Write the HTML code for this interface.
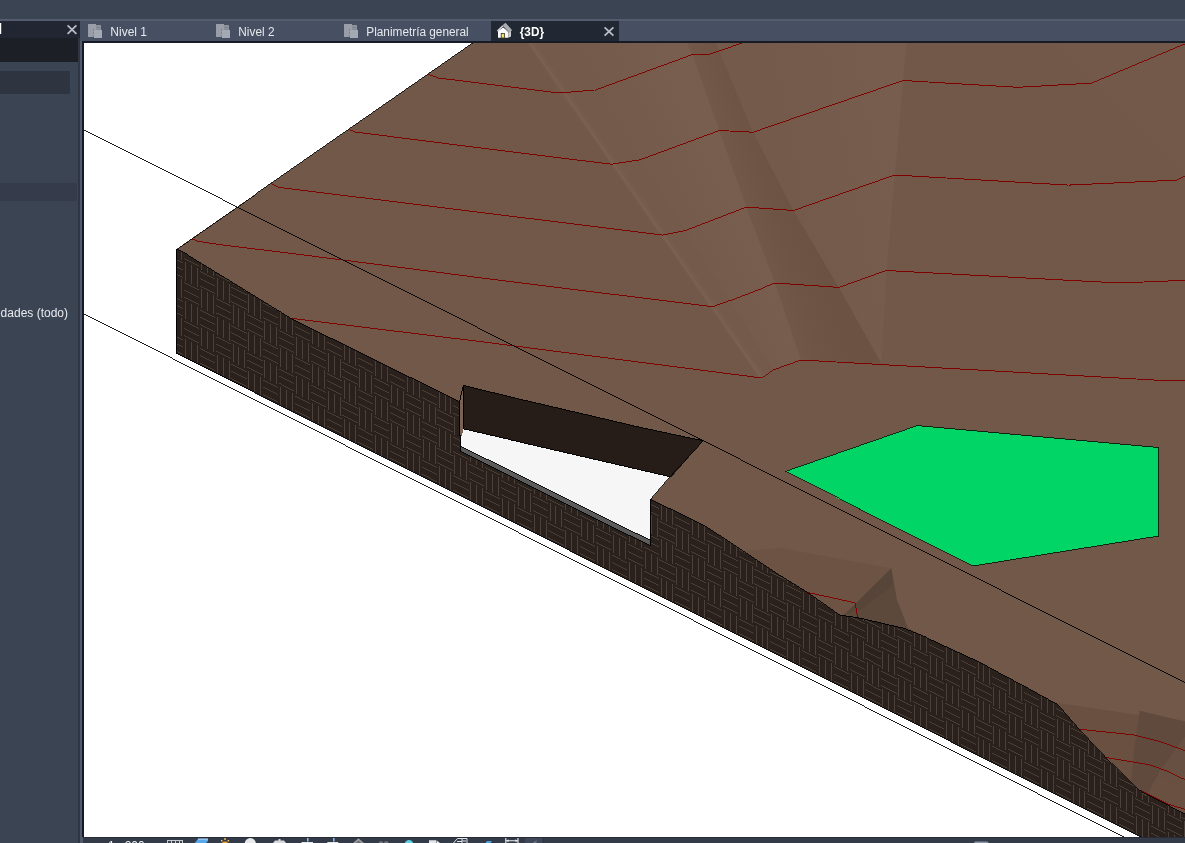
<!DOCTYPE html>
<html lang="es">
<head>
<meta charset="utf-8">
<title>Revit - {3D}</title>
<style>
html,body{margin:0;padding:0;}
body{width:1185px;height:843px;overflow:hidden;background:#3b4453;position:relative;font-family:"Liberation Sans",sans-serif;font-size:12px;color:#e4e7ec;}
.abs{position:absolute;}
#topbar{left:0;top:0;width:1185px;height:19px;background:#3b4453;}
#tabbar{left:80px;top:21px;width:1105px;height:20px;background:#475062;}
#topline{left:0;top:19px;width:1185px;height:2px;background:#525c6c;}
#tabline{left:83px;top:41px;width:1102px;height:2px;background:#161b25;}
.tab{top:21px;height:20px;line-height:20px;white-space:nowrap;}
.tab .lbl{position:absolute;top:0;left:0;}
#tab3d{left:491px;width:128px;background:#222833;}
#panel{left:0;top:19px;width:80px;height:824px;background:#3b4453;}
#phead{left:0;top:21px;width:80px;height:17px;background:#212632;}
#pdark{left:0;top:38px;width:78px;height:24px;background:#1c1f26;}
#pbox1{left:0;top:71px;width:70px;height:23px;background:#2e3440;}
#pbox2{left:0;top:183px;width:77px;height:18px;background:#353b4a;}
#pedge{left:78px;top:38px;width:2px;height:805px;background:#2f3541;}
#psplit{left:80px;top:21px;width:3px;height:824px;background:#505a6b;}
#pline{left:82px;top:41px;width:2px;height:796px;background:#161b25;}
#view{left:84px;top:43px;width:1101px;height:794px;background:#fff;overflow:hidden;}
#bottombar{left:83px;top:837px;width:1102px;height:6px;background:#333b48;overflow:hidden;border-top:1px solid #272c36;box-sizing:border-box;}
#ptext{will-change:transform;left:-42.5px;top:306px;width:110px;text-align:right;white-space:nowrap;color:#e8eaee;font-size:12px;line-height:14px;}
</style>
</head>
<body>
<div id="topbar" class="abs"></div>
<div id="panel" class="abs"></div>
<div id="phead" class="abs"></div>
<div id="pdark" class="abs"></div>
<div id="pbox1" class="abs"></div>
<div id="pbox2" class="abs"></div>
<div id="ptext" class="abs">Propiedades (todo)</div>
<div id="pedge" class="abs"></div>
<div id="psplit" class="abs"></div>
<div id="topline" class="abs"></div>
<div id="tabbar" class="abs"></div>
<div id="tab3d" class="abs tab"></div>
<div id="tabline" class="abs"></div>
<div id="pline" class="abs"></div>
<div id="view" class="abs">
<svg width="1185" height="843" viewBox="0 0 1185 843" style="position:absolute;left:-84px;top:-43px;">
<defs><clipPath id="sidec"><polygon points="176.5,249 188.2,255.3 236,284.6 292,319 459.5,401.7 650.6,499.2 706.3,526.6 780,575.4 807,592 839.9,615.1 857.6,617.6 901.5,627.8 926.8,637.9 980,662.4 1000,673.3 1025,686.6 1058.2,704.9 1079.8,729.8 1106.4,758 1139.6,790.5 1185,814 1185,860 1141,837 176.5,353.5"/></clipPath>
<linearGradient id="gband" gradientUnits="userSpaceOnUse" x1="740" y1="215" x2="800" y2="195"><stop offset="0" stop-color="#735949"/><stop offset="0.55" stop-color="#6d5445"/><stop offset="1" stop-color="#6b5243"/></linearGradient>
<linearGradient id="gright" gradientUnits="userSpaceOnUse" x1="800" y1="200" x2="900" y2="180"><stop offset="0" stop-color="#735a4a"/><stop offset="1" stop-color="#775d4d"/></linearGradient>
<linearGradient id="gmid" gradientUnits="userSpaceOnUse" x1="670" y1="240" x2="745" y2="205"><stop offset="0" stop-color="#745a4a"/><stop offset="1" stop-color="#785e4e"/></linearGradient>
</defs>
<polygon points="176.5,249 188.2,255.3 236,284.6 292,319 459.5,401.7 650.6,499.2 706.3,526.6 780,575.4 807,592 839.9,615.1 857.6,617.6 901.5,627.8 926.8,637.9 980,662.4 1000,673.3 1025,686.6 1058.2,704.9 1079.8,729.8 1106.4,758 1139.6,790.5 1185,814 1185,860 1141,837 176.5,353.5" fill="#2a211c" shape-rendering="crispEdges"/>
<g clip-path="url(#sidec)" fill="none" stroke="#4c413a" shape-rendering="crispEdges">
<path stroke-width="1" d="M169.5 235V253.6M175.5 238V256.6M181.5 240.9V259.6M169.5 273.4V292M175.5 276.4V295M181.5 279.4V298M169.5 311.8V330.5M175.5 314.8V333.5M181.5 317.8V336.4M169.5 350.3V368.9M175.5 353.3V371.9M181.5 356.3V374.9M185.5 262.1V280.8M191.5 265.1V283.7M197.5 268.1V286.7M185.5 300.6V319.2M191.5 303.6V322.2M197.5 306.6V325.2M185.5 339V357.6M191.5 342V360.6M197.5 345V363.6M201.5 250.9V269.5M207.5 253.9V272.5M213.5 256.8V275.5M201.5 289.3V307.9M207.5 292.3V310.9M213.5 295.3V313.9M201.5 327.8V346.4M207.5 330.7V349.4M213.5 333.7V352.3M201.5 366.2V384.8M207.5 369.2V387.8M213.5 372.2V390.8M217.5 278.1V296.7M223.5 281V299.7M229.5 284V302.6M217.5 316.5V335.1M223.5 319.5V338.1M229.5 322.5V341.1M217.5 354.9V373.6M223.5 357.9V376.5M229.5 360.9V379.5M233.5 266.8V285.4M238.5 269.8V288.4M244.5 272.8V291.4M233.5 305.2V323.9M238.5 308.2V326.8M244.5 311.2V329.8M233.5 343.7V362.3M238.5 346.7V365.3M244.5 349.6V368.3M233.5 382.1V400.7M238.5 385.1V403.7M244.5 388.1V406.7M248.5 294V312.6M254.5 297V315.6M260.5 299.9V318.6M248.5 332.4V351M254.5 335.4V354M260.5 338.4V357M248.5 370.9V389.5M254.5 373.8V392.5M260.5 376.8V395.4M264.5 282.7V301.3M270.5 285.7V304.3M276.5 288.7V307.3M264.5 321.1V339.8M270.5 324.1V342.8M276.5 327.1V345.7M264.5 359.6V378.2M270.5 362.6V381.2M276.5 365.6V384.2M264.5 398V416.6M270.5 401V419.6M276.5 404V422.6M280.5 309.9V328.5M286.5 312.9V331.5M292.5 315.9V334.5M280.5 348.3V366.9M286.5 351.3V369.9M292.5 354.3V372.9M280.5 386.8V405.4M286.5 389.7V408.4M292.5 392.7V411.4M296.5 298.6V317.2M302.5 301.6V320.2M308.5 304.6V323.2M296.5 337.1V355.7M302.5 340V358.7M308.5 343V361.6M296.5 375.5V394.1M302.5 378.5V397.1M308.5 381.5V400.1M296.5 413.9V432.6M302.5 416.9V435.5M308.5 419.9V438.5M312.5 325.8V344.4M318.5 328.8V347.4M324.5 331.8V350.4M312.5 364.2V382.9M318.5 367.2V385.8M324.5 370.2V388.8M312.5 402.7V421.3M318.5 405.7V424.3M324.5 408.6V427.3M328.5 314.5V333.2M334.5 317.5V336.1M340.5 320.5V339.1M328.5 353V371.6M334.5 356V374.6M340.5 358.9V377.6M328.5 391.4V410M334.5 394.4V413M340.5 397.4V416M328.5 429.9V448.5M334.5 432.8V451.5M340.5 435.8V454.4M344.5 341.7V360.3M349.5 344.7V363.3M355.5 347.7V366.3M344.5 380.2V398.8M349.5 383.1V401.8M355.5 386.1V404.7M344.5 418.6V437.2M349.5 421.6V440.2M355.5 424.6V443.2M359.5 330.4V349.1M365.5 333.4V352.1M371.5 336.4V355M359.5 368.9V387.5M365.5 371.9V390.5M371.5 374.9V393.5M359.5 407.3V425.9M365.5 410.3V428.9M371.5 413.3V431.9M359.5 445.8V464.4M365.5 448.8V467.4M371.5 451.7V470.4M375.5 357.6V376.2M381.5 360.6V379.2M387.5 363.6V382.2M375.5 396.1V414.7M381.5 399V417.7M387.5 402V420.7M375.5 434.5V453.1M381.5 437.5V456.1M387.5 440.5V459.1M391.5 346.4V365M397.5 349.3V368M403.5 352.3V370.9M391.5 384.8V403.4M397.5 387.8V406.4M403.5 390.8V409.4M391.5 423.2V441.9M397.5 426.2V444.8M403.5 429.2V447.8M391.5 461.7V480.3M397.5 464.7V483.3M403.5 467.6V486.3M407.5 373.5V392.2M413.5 376.5V395.1M419.5 379.5V398.1M407.5 412V430.6M413.5 415V433.6M419.5 417.9V436.6M407.5 450.4V469M413.5 453.4V472M419.5 456.4V475M423.5 362.3V380.9M429.5 365.3V383.9M435.5 368.2V386.9M423.5 400.7V419.3M429.5 403.7V422.3M435.5 406.7V425.3M423.5 439.2V457.8M429.5 442.1V460.8M435.5 445.1V463.7M423.5 477.6V496.2M429.5 480.6V499.2M435.5 483.6V502.2M439.5 389.5V408.1M445.5 392.4V411.1M450.5 395.4V414M439.5 427.9V446.5M445.5 430.9V449.5M450.5 433.9V452.5M439.5 466.3V485M445.5 469.3V487.9M450.5 472.3V490.9M454.5 378.2V396.8M460.5 381.2V399.8M466.5 384.2V402.8M454.5 416.6V435.2M460.5 419.6V438.2M466.5 422.6V441.2M454.5 455.1V473.7M460.5 458.1V476.7M466.5 461V479.7M454.5 493.5V512.1M460.5 496.5V515.1M466.5 499.5V518.1M470.5 405.4V424M476.5 408.3V427M482.5 411.3V430M470.5 443.8V462.4M476.5 446.8V465.4M482.5 449.8V468.4M470.5 482.2V500.9M476.5 485.2V503.8M482.5 488.2V506.8M486.5 394.1V412.7M492.5 397.1V415.7M498.5 400.1V418.7M486.5 432.5V451.2M492.5 435.5V454.1M498.5 438.5V457.1M486.5 471V489.6M492.5 474V492.6M498.5 476.9V495.6M486.5 509.4V528M492.5 512.4V531M498.5 515.4V534M502.5 421.3V439.9M508.5 424.3V442.9M514.5 427.2V445.9M502.5 459.7V478.3M508.5 462.7V481.3M514.5 465.7V484.3M502.5 498.2V516.8M508.5 501.1V519.8M514.5 504.1V522.7M518.5 410V428.6M524.5 413V431.6M530.5 416V434.6M518.5 448.5V467.1M524.5 451.4V470.1M530.5 454.4V473M518.5 486.9V505.5M524.5 489.9V508.5M530.5 492.9V511.5M518.5 525.3V544M524.5 528.3V546.9M530.5 531.3V549.9M534.5 437.2V455.8M540.5 440.2V458.8M546.5 443.2V461.8M534.5 475.6V494.3M540.5 478.6V497.2M546.5 481.6V500.2M534.5 514.1V532.7M540.5 517.1V535.7M546.5 520V538.7M550.5 425.9V444.5M555.5 428.9V447.5M561.5 431.9V450.5M550.5 464.4V483M555.5 467.4V486M561.5 470.3V489M550.5 502.8V521.4M555.5 505.8V524.4M561.5 508.8V527.4M550.5 541.2V559.9M555.5 544.2V562.9M561.5 547.2V565.8M565.5 453.1V471.7M571.5 456.1V474.7M577.5 459.1V477.7M565.5 491.5V510.2M571.5 494.5V513.1M577.5 497.5V516.1M565.5 530V548.6M571.5 533V551.6M577.5 536V554.6M581.5 441.8V460.5M587.5 444.8V463.4M593.5 447.8V466.4M581.5 480.3V498.9M587.5 483.3V501.9M593.5 486.2V504.9M581.5 518.7V537.3M587.5 521.7V540.3M593.5 524.7V543.3M581.5 557.2V575.8M587.5 560.1V578.8M593.5 563.1V581.7M597.5 469V487.6M603.5 472V490.6M609.5 475V493.6M597.5 507.5V526.1M603.5 510.4V529.1M609.5 513.4V532M597.5 545.9V564.5M603.5 548.9V567.5M609.5 551.9V570.5M613.5 457.8V476.4M619.5 460.7V479.4M625.5 463.7V482.3M613.5 496.2V514.8M619.5 499.2V517.8M625.5 502.2V520.8M613.5 534.6V553.3M619.5 537.6V556.2M625.5 540.6V559.2M613.5 573.1V591.7M619.5 576.1V594.7M625.5 579V597.7M629.5 484.9V503.6M635.5 487.9V506.5M641.5 490.9V509.5M629.5 523.4V542M635.5 526.4V545M641.5 529.3V548M629.5 561.8V580.4M635.5 564.8V583.4M641.5 567.8V586.4M645.5 473.7V492.3M651.5 476.7V495.3M657.5 479.6V498.3M645.5 512.1V530.7M651.5 515.1V533.7M657.5 518.1V536.7M645.5 550.5V569.2M651.5 553.5V572.2M657.5 556.5V575.1M645.5 589V607.6M651.5 592V610.6M657.5 595V613.6M661.5 500.8V519.5M666.5 503.8V522.4M672.5 506.8V525.4M661.5 539.3V557.9M666.5 542.3V560.9M672.5 545.3V563.9M661.5 577.7V596.3M666.5 580.7V599.3M672.5 583.7V602.3M676.5 489.6V508.2M682.5 492.6V511.2M688.5 495.5V514.2M676.5 528V546.6M682.5 531V549.6M688.5 534V552.6M676.5 566.5V585.1M682.5 569.4V588.1M688.5 572.4V591M676.5 604.9V623.5M682.5 607.9V626.5M688.5 610.9V629.5M692.5 516.8V535.4M698.5 519.7V538.4M704.5 522.7V541.3M692.5 555.2V573.8M698.5 558.2V576.8M704.5 561.2V579.8M692.5 593.6V612.3M698.5 596.6V615.2M704.5 599.6V618.2M708.5 505.5V524.1M714.5 508.5V527.1M720.5 511.5V530.1M708.5 543.9V562.6M714.5 546.9V565.5M720.5 549.9V568.5M708.5 582.4V601M714.5 585.4V604M720.5 588.3V607M708.5 620.8V639.4M714.5 623.8V642.4M720.5 626.8V645.4M724.5 532.7V551.3M730.5 535.7V554.3M736.5 538.6V557.3M724.5 571.1V589.7M730.5 574.1V592.7M736.5 577.1V595.7M724.5 609.6V628.2M730.5 612.5V631.2M736.5 615.5V634.1M740.5 521.4V540M746.5 524.4V543M752.5 527.4V546M740.5 559.8V578.5M746.5 562.8V581.5M752.5 565.8V584.4M740.5 598.3V616.9M746.5 601.3V619.9M752.5 604.3V622.9M740.5 636.7V655.3M746.5 639.7V658.3M752.5 642.7V661.3M756.5 548.6V567.2M762.5 551.6V570.2M767.5 554.6V573.2M756.5 587V605.6M762.5 590V608.6M767.5 593V611.6M756.5 625.5V644.1M762.5 628.4V647.1M767.5 631.4V650.1M771.5 575.8V594.4M777.5 578.7V597.4M783.5 581.7V600.4M771.5 614.2V632.8M777.5 617.2V635.8M783.5 620.2V638.8M771.5 652.6V671.3M777.5 655.6V674.2M783.5 658.6V677.2M787.5 564.5V583.1M793.5 567.5V586.1M799.5 570.5V589.1M787.5 602.9V621.6M793.5 605.9V624.5M799.5 608.9V627.5M787.5 641.4V660M793.5 644.4V663M799.5 647.3V666M803.5 591.7V610.3M809.5 594.7V613.3M815.5 597.6V616.3M803.5 630.1V648.7M809.5 633.1V651.7M815.5 636.1V654.7M803.5 668.6V687.2M809.5 671.5V690.2M815.5 674.5V693.1M819.5 580.4V599M825.5 583.4V602M831.5 586.4V605M819.5 618.9V637.5M825.5 621.8V640.5M831.5 624.8V643.4M819.5 657.3V675.9M825.5 660.3V678.9M831.5 663.3V681.9M835.5 607.6V626.2M841.5 610.6V629.2M847.5 613.6V632.2M835.5 646V664.6M841.5 649V667.6M847.5 652V670.6M835.5 684.5V703.1M841.5 687.5V706.1M847.5 690.4V709.1M851.5 596.3V614.9M857.5 599.3V617.9M863.5 602.3V620.9M851.5 634.8V653.4M857.5 637.7V656.4M863.5 640.7V659.4M851.5 673.2V691.8M857.5 676.2V694.8M863.5 679.2V697.8M867.5 623.5V642.1M872.5 626.5V645.1M878.5 629.5V648.1M867.5 661.9V680.6M872.5 664.9V683.5M878.5 667.9V686.5M867.5 700.4V719M872.5 703.4V722M878.5 706.4V725M882.5 612.2V630.9M888.5 615.2V633.8M894.5 618.2V636.8M882.5 650.7V669.3M888.5 653.7V672.3M894.5 656.6V675.3M882.5 689.1V707.7M888.5 692.1V710.7M894.5 695.1V713.7M898.5 601V619.6M904.5 604V622.6M910.5 606.9V625.6M898.5 639.4V658M904.5 642.4V661M910.5 645.4V664M898.5 677.9V696.5M904.5 680.8V699.5M910.5 683.8V702.4M898.5 716.3V734.9M904.5 719.3V737.9M910.5 722.3V740.9M914.5 628.2V646.8M920.5 631.1V649.8M926.5 634.1V652.7M914.5 666.6V685.2M920.5 669.6V688.2M926.5 672.6V691.2M914.5 705V723.7M920.5 708V726.6M926.5 711V729.6M930.5 616.9V635.5M936.5 619.9V638.5M942.5 622.9V641.5M930.5 655.3V673.9M936.5 658.3V676.9M942.5 661.3V679.9M930.5 693.8V712.4M936.5 696.8V715.4M942.5 699.7V718.4M930.5 732.2V750.8M936.5 735.2V753.8M942.5 738.2V756.8M946.5 644.1V662.7M952.5 647V665.7M958.5 650V668.7M946.5 682.5V701.1M952.5 685.5V704.1M958.5 688.5V707.1M946.5 720.9V739.6M952.5 723.9V742.5M958.5 726.9V745.5M962.5 632.8V651.4M968.5 635.8V654.4M974.5 638.8V657.4M962.5 671.2V689.9M968.5 674.2V692.8M974.5 677.2V695.8M962.5 709.7V728.3M968.5 712.7V731.3M974.5 715.7V734.3M962.5 748.1V766.7M968.5 751.1V769.7M974.5 754.1V772.7M978.5 660V678.6M983.5 663V681.6M989.5 665.9V684.6M978.5 698.4V717M983.5 701.4V720M989.5 704.4V723M978.5 736.9V755.5M983.5 739.8V758.5M989.5 742.8V761.4M993.5 648.7V667.3M999.5 651.7V670.3M1005.5 654.7V673.3M993.5 687.2V705.8M999.5 690.1V708.8M1005.5 693.1V711.7M993.5 725.6V744.2M999.5 728.6V747.2M1005.5 731.6V750.2M993.5 764V782.7M999.5 767V785.6M1005.5 770V788.6M1009.5 675.9V694.5M1015.5 678.9V697.5M1021.5 681.9V700.5M1009.5 714.3V733M1015.5 717.3V735.9M1021.5 720.3V738.9M1009.5 752.8V771.4M1015.5 755.8V774.4M1021.5 758.7V777.4M1025.5 664.6V683.2M1031.5 667.6V686.2M1037.5 670.6V689.2M1025.5 703.1V721.7M1031.5 706.1V724.7M1037.5 709V727.7M1025.5 741.5V760.1M1031.5 744.5V763.1M1037.5 747.5V766.1M1025.5 779.9V798.6M1031.5 782.9V801.6M1037.5 785.9V804.5M1041.5 691.8V710.4M1047.5 694.8V713.4M1053.5 697.8V716.4M1041.5 730.2V748.9M1047.5 733.2V751.9M1053.5 736.2V754.8M1041.5 768.7V787.3M1047.5 771.7V790.3M1053.5 774.7V793.3M1057.5 680.5V699.2M1063.5 683.5V702.1M1069.5 686.5V705.1M1057.5 719V737.6M1063.5 722V740.6M1069.5 725V743.6M1057.5 757.4V776M1063.5 760.4V779M1069.5 763.4V782M1057.5 795.9V814.5M1063.5 798.8V817.5M1069.5 801.8V820.5M1073.5 707.7V726.3M1079.5 710.7V729.3M1084.5 713.7V732.3M1073.5 746.2V764.8M1079.5 749.1V767.8M1084.5 752.1V770.7M1073.5 784.6V803.2M1079.5 787.6V806.2M1084.5 790.6V809.2M1088.5 734.9V753.5M1094.5 737.9V756.5M1100.5 740.9V759.5M1088.5 773.3V792M1094.5 776.3V794.9M1100.5 779.3V797.9M1088.5 811.8V830.4M1094.5 814.8V833.4M1100.5 817.7V836.4M1104.5 762.1V780.7M1110.5 765.1V783.7M1116.5 768V786.7M1104.5 800.5V819.1M1110.5 803.5V822.1M1116.5 806.5V825.1M1120.5 750.8V769.4M1126.5 753.8V772.4M1132.5 756.8V775.4M1120.5 789.2V807.9M1126.5 792.2V810.9M1132.5 795.2V813.8M1120.5 827.7V846.3M1126.5 830.7V849.3M1132.5 833.7V852.3M1136.5 778V796.6M1142.5 781V799.6M1148.5 784V802.6M1136.5 816.4V835M1142.5 819.4V838M1148.5 822.4V841M1152.5 805.2V823.8M1158.5 808.1V826.8M1164.5 811.1V829.8M1152.5 843.6V862.2M1158.5 846.6V865.2M1164.5 849.6V868.2M1168.5 793.9V812.5M1174.5 796.9V815.5M1180.5 799.9V818.5M1168.5 832.3V851M1174.5 835.3V853.9M1180.5 838.3V856.9M1184.5 821.1V839.7M1189.5 824.1V842.7M1195.5 827V845.7M1184.5 859.5V878.1M1189.5 862.5V881.1M1195.5 865.5V884.1"/>
<path stroke-width="0.9" d="M168 255.4L183.2 263.1M168 262.7L183.2 270.3M168 269.9L183.2 277.5M168 293.9L183.2 301.5M168 301.1L183.2 308.7M168 308.3L183.2 316M168 332.3L183.2 340M168 339.5L183.2 347.2M168 346.7L183.2 354.4M183.8 244.2L199.1 251.8M183.8 251.4L199.1 259M183.8 258.6L199.1 266.3M183.8 282.6L199.1 290.3M183.8 289.8L199.1 297.5M183.8 297L199.1 304.7M183.8 321.1L199.1 328.7M183.8 328.3L199.1 335.9M183.8 335.5L199.1 343.1M183.8 359.5L199.1 367.2M183.8 366.7L199.1 374.4M183.8 373.9L199.1 381.6M199.7 271.4L214.9 279M199.7 278.6L214.9 286.2M199.7 285.8L214.9 293.4M199.7 309.8L214.9 317.5M199.7 317L214.9 324.7M199.7 324.2L214.9 331.9M199.7 348.2L214.9 355.9M199.7 355.4L214.9 363.1M199.7 362.7L214.9 370.3M215.5 260.1L230.8 267.8M215.5 267.3L230.8 275M215.5 274.5L230.8 282.2M215.5 298.5L230.8 306.2M215.5 305.7L230.8 313.4M215.5 313L230.8 320.6M215.5 337L230.8 344.6M215.5 344.2L230.8 351.8M215.5 351.4L230.8 359M215.5 375.4L230.8 383.1M215.5 382.6L230.8 390.3M215.5 389.8L230.8 397.5M231.4 287.3L246.6 294.9M231.4 294.5L246.6 302.1M231.4 301.7L246.6 309.3M231.4 325.7L246.6 333.4M231.4 332.9L246.6 340.6M231.4 340.1L246.6 347.8M231.4 364.2L246.6 371.8M231.4 371.4L246.6 379M231.4 378.6L246.6 386.2M247.2 276L262.5 283.7M247.2 283.2L262.5 290.9M247.2 290.4L262.5 298.1M247.2 314.4L262.5 322.1M247.2 321.7L262.5 329.3M247.2 328.9L262.5 336.5M247.2 352.9L262.5 360.5M247.2 360.1L262.5 367.8M247.2 367.3L262.5 375M247.2 391.3L262.5 399M247.2 398.5L262.5 406.2M247.2 405.7L262.5 413.4M263.1 303.2L278.3 310.8M263.1 310.4L278.3 318M263.1 317.6L278.3 325.3M263.1 341.6L278.3 349.3M263.1 348.8L278.3 356.5M263.1 356L278.3 363.7M263.1 380.1L278.3 387.7M263.1 387.3L278.3 394.9M263.1 394.5L278.3 402.1M278.9 291.9L294.2 299.6M278.9 299.1L294.2 306.8M278.9 306.3L294.2 314M278.9 330.4L294.2 338M278.9 337.6L294.2 345.2M278.9 344.8L294.2 352.4M278.9 368.8L294.2 376.5M278.9 376L294.2 383.7M278.9 383.2L294.2 390.9M278.9 407.2L294.2 414.9M278.9 414.5L294.2 422.1M278.9 421.7L294.2 429.3M294.8 319.1L310 326.8M294.8 326.3L310 334M294.8 333.5L310 341.2M294.8 357.5L310 365.2M294.8 364.7L310 372.4M294.8 372L310 379.6M294.8 396L310 403.6M294.8 403.2L310 410.8M294.8 410.4L310 418.1M310.6 307.8L325.9 315.5M310.6 315L325.9 322.7M310.6 322.3L325.9 329.9M310.6 346.3L325.9 353.9M310.6 353.5L325.9 361.1M310.6 360.7L325.9 368.3M310.6 384.7L325.9 392.4M310.6 391.9L325.9 399.6M310.6 399.1L325.9 406.8M310.6 423.2L325.9 430.8M310.6 430.4L325.9 438M310.6 437.6L325.9 445.2M326.5 335L341.7 342.7M326.5 342.2L341.7 349.9M326.5 349.4L341.7 357.1M326.5 373.5L341.7 381.1M326.5 380.7L341.7 388.3M326.5 387.9L341.7 395.5M326.5 411.9L341.7 419.5M326.5 419.1L341.7 426.8M326.5 426.3L341.7 434M342.3 323.8L357.6 331.4M342.3 331L357.6 338.6M342.3 338.2L357.6 345.8M342.3 362.2L357.6 369.8M342.3 369.4L357.6 377.1M342.3 376.6L357.6 384.3M342.3 400.6L357.6 408.3M342.3 407.8L357.6 415.5M342.3 415L357.6 422.7M342.3 439.1L357.6 446.7M342.3 446.3L357.6 453.9M342.3 453.5L357.6 461.1M358.2 350.9L373.4 358.6M358.2 358.1L373.4 365.8M358.2 365.3L373.4 373M358.2 389.4L373.4 397M358.2 396.6L373.4 404.2M358.2 403.8L373.4 411.4M358.2 427.8L373.4 435.5M358.2 435L373.4 442.7M358.2 442.2L373.4 449.9M374 339.7L389.3 347.3M374 346.9L389.3 354.5M374 354.1L389.3 361.7M374 378.1L389.3 385.8M374 385.3L389.3 393M374 392.5L389.3 400.2M374 416.5L389.3 424.2M374 423.8L389.3 431.4M374 431L389.3 438.6M374 455L389.3 462.6M374 462.2L389.3 469.8M374 469.4L389.3 477.1M389.9 366.8L405.1 374.5M389.9 374L405.1 381.7M389.9 381.3L405.1 388.9M389.9 405.3L405.1 412.9M389.9 412.5L405.1 420.1M389.9 419.7L405.1 427.4M389.9 443.7L405.1 451.4M389.9 450.9L405.1 458.6M389.9 458.1L405.1 465.8M405.7 355.6L421 363.2M405.7 362.8L421 370.4M405.7 370L421 377.6M405.7 394L421 401.7M405.7 401.2L421 408.9M405.7 408.4L421 416.1M405.7 432.5L421 440.1M405.7 439.7L421 447.3M405.7 446.9L421 454.5M405.7 470.9L421 478.6M405.7 478.1L421 485.8M405.7 485.3L421 493M421.6 382.8L436.8 390.4M421.6 390L436.8 397.6M421.6 397.2L436.8 404.8M421.6 421.2L436.8 428.8M421.6 428.4L436.8 436.1M421.6 435.6L436.8 443.3M421.6 459.6L436.8 467.3M421.6 466.8L436.8 474.5M421.6 474L436.8 481.7M437.4 371.5L452.7 379.1M437.4 378.7L452.7 386.4M437.4 385.9L452.7 393.6M437.4 409.9L452.7 417.6M437.4 417.1L452.7 424.8M437.4 424.3L452.7 432M437.4 448.4L452.7 456M437.4 455.6L452.7 463.2M437.4 462.8L452.7 470.4M437.4 486.8L452.7 494.5M437.4 494L452.7 501.7M437.4 501.2L452.7 508.9M453.3 398.7L468.5 406.3M453.3 405.9L468.5 413.5M453.3 413.1L468.5 420.7M453.3 437.1L468.5 444.8M453.3 444.3L468.5 452M453.3 451.5L468.5 459.2M453.3 475.5L468.5 483.2M453.3 482.8L468.5 490.4M453.3 490L468.5 497.6M469.1 387.4L484.4 395.1M469.1 394.6L484.4 402.3M469.1 401.8L484.4 409.5M469.1 425.8L484.4 433.5M469.1 433.1L484.4 440.7M469.1 440.3L484.4 447.9M469.1 464.3L484.4 471.9M469.1 471.5L484.4 479.1M469.1 478.7L484.4 486.4M469.1 502.7L484.4 510.4M469.1 509.9L484.4 517.6M469.1 517.1L484.4 524.8M485 414.6L500.2 422.2M485 421.8L500.2 429.4M485 429L500.2 436.7M485 453L500.2 460.7M485 460.2L500.2 467.9M485 467.4L500.2 475.1M485 491.5L500.2 499.1M485 498.7L500.2 506.3M485 505.9L500.2 513.5M500.8 403.3L516.1 411M500.8 410.5L516.1 418.2M500.8 417.7L516.1 425.4M500.8 441.8L516.1 449.4M500.8 449L516.1 456.6M500.8 456.2L516.1 463.8M500.8 480.2L516.1 487.9M500.8 487.4L516.1 495.1M500.8 494.6L516.1 502.3M500.8 518.6L516.1 526.3M500.8 525.8L516.1 533.5M500.8 533.1L516.1 540.7M516.7 430.5L531.9 438.1M516.7 437.7L531.9 445.4M516.7 444.9L531.9 452.6M516.7 468.9L531.9 476.6M516.7 476.1L531.9 483.8M516.7 483.3L531.9 491M516.7 507.4L531.9 515M516.7 514.6L531.9 522.2M516.7 521.8L531.9 529.4M532.5 419.2L547.8 426.9M532.5 426.4L547.8 434.1M532.5 433.6L547.8 441.3M532.5 457.7L547.8 465.3M532.5 464.9L547.8 472.5M532.5 472.1L547.8 479.7M532.5 496.1L547.8 503.8M532.5 503.3L547.8 511M532.5 510.5L547.8 518.2M532.5 534.6L547.8 542.2M532.5 541.8L547.8 549.4M532.5 549L547.8 556.6M548.4 446.4L563.6 454.1M548.4 453.6L563.6 461.3M548.4 460.8L563.6 468.5M548.4 484.8L563.6 492.5M548.4 492.1L563.6 499.7M548.4 499.3L563.6 506.9M548.4 523.3L563.6 530.9M548.4 530.5L563.6 538.2M548.4 537.7L563.6 545.4M564.2 435.1L579.5 442.8M564.2 442.4L579.5 450M564.2 449.6L579.5 457.2M564.2 473.6L579.5 481.2M564.2 480.8L579.5 488.4M564.2 488L579.5 495.7M564.2 512L579.5 519.7M564.2 519.2L579.5 526.9M564.2 526.4L579.5 534.1M564.2 550.5L579.5 558.1M564.2 557.7L579.5 565.3M564.2 564.9L579.5 572.5M580.1 462.3L595.3 470M580.1 469.5L595.3 477.2M580.1 476.7L595.3 484.4M580.1 500.8L595.3 508.4M580.1 508L595.3 515.6M580.1 515.2L595.3 522.8M580.1 539.2L595.3 546.9M580.1 546.4L595.3 554.1M580.1 553.6L595.3 561.3M595.9 451.1L611.2 458.7M595.9 458.3L611.2 465.9M595.9 465.5L611.2 473.1M595.9 489.5L611.2 497.2M595.9 496.7L611.2 504.4M595.9 503.9L611.2 511.6M595.9 527.9L611.2 535.6M595.9 535.1L611.2 542.8M595.9 542.4L611.2 550M595.9 566.4L611.2 574M595.9 573.6L611.2 581.2M595.9 580.8L611.2 588.4M611.8 478.2L627 485.9M611.8 485.4L627 493.1M611.8 492.6L627 500.3M611.8 516.7L627 524.3M611.8 523.9L627 531.5M611.8 531.1L627 538.7M611.8 555.1L627 562.8M611.8 562.3L627 570M611.8 569.5L627 577.2M627.6 467L642.9 474.6M627.6 474.2L642.9 481.8M627.6 481.4L642.9 489M627.6 505.4L642.9 513.1M627.6 512.6L642.9 520.3M627.6 519.8L642.9 527.5M627.6 543.9L642.9 551.5M627.6 551.1L642.9 558.7M627.6 558.3L642.9 565.9M627.6 582.3L642.9 589.9M627.6 589.5L642.9 597.2M627.6 596.7L642.9 604.4M643.5 494.1L658.7 501.8M643.5 501.4L658.7 509M643.5 508.6L658.7 516.2M643.5 532.6L658.7 540.2M643.5 539.8L658.7 547.5M643.5 547L658.7 554.7M643.5 571L658.7 578.7M643.5 578.2L658.7 585.9M643.5 585.4L658.7 593.1M659.3 482.9L674.6 490.5M659.3 490.1L674.6 497.7M659.3 497.3L674.6 505M659.3 521.3L674.6 529M659.3 528.5L674.6 536.2M659.3 535.7L674.6 543.4M659.3 559.8L674.6 567.4M659.3 567L674.6 574.6M659.3 574.2L674.6 581.8M659.3 598.2L674.6 605.9M659.3 605.4L674.6 613.1M659.3 612.6L674.6 620.3M675.2 510.1L690.4 517.7M675.2 517.3L690.4 524.9M675.2 524.5L690.4 532.1M675.2 548.5L690.4 556.2M675.2 555.7L690.4 563.4M675.2 562.9L690.4 570.6M675.2 586.9L690.4 594.6M675.2 594.1L690.4 601.8M675.2 601.4L690.4 609M691 498.8L706.3 506.5M691 506L706.3 513.7M691 513.2L706.3 520.9M691 537.2L706.3 544.9M691 544.4L706.3 552.1M691 551.7L706.3 559.3M691 575.7L706.3 583.3M691 582.9L706.3 590.5M691 590.1L706.3 597.7M691 614.1L706.3 621.8M691 621.3L706.3 629M691 628.5L706.3 636.2M706.9 526L722.1 533.6M706.9 533.2L722.1 540.8M706.9 540.4L722.1 548M706.9 564.4L722.1 572.1M706.9 571.6L722.1 579.3M706.9 578.8L722.1 586.5M706.9 602.9L722.1 610.5M706.9 610.1L722.1 617.7M706.9 617.3L722.1 624.9M722.7 514.7L738 522.4M722.7 521.9L738 529.6M722.7 529.1L738 536.8M722.7 553.2L738 560.8M722.7 560.4L738 568M722.7 567.6L738 575.2M722.7 591.6L738 599.2M722.7 598.8L738 606.5M722.7 606L738 613.7M722.7 630L738 637.7M722.7 637.2L738 644.9M722.7 644.4L738 652.1M738.6 541.9L753.8 549.5M738.6 549.1L753.8 556.8M738.6 556.3L753.8 564M738.6 580.3L753.8 588M738.6 587.5L753.8 595.2M738.6 594.7L753.8 602.4M738.6 618.8L753.8 626.4M738.6 626L753.8 633.6M738.6 633.2L753.8 640.8M754.4 569.1L769.7 576.7M754.4 576.3L769.7 583.9M754.4 583.5L769.7 591.1M754.4 607.5L769.7 615.2M754.4 614.7L769.7 622.4M754.4 621.9L769.7 629.6M754.4 645.9L769.7 653.6M754.4 653.2L769.7 660.8M754.4 660.4L769.7 668M770.3 557.8L785.5 565.5M770.3 565L785.5 572.7M770.3 572.2L785.5 579.9M770.3 596.2L785.5 603.9M770.3 603.4L785.5 611.1M770.3 610.7L785.5 618.3M770.3 634.7L785.5 642.3M770.3 641.9L785.5 649.5M770.3 649.1L785.5 656.8M786.1 585L801.4 592.6M786.1 592.2L801.4 599.8M786.1 599.4L801.4 607M786.1 623.4L801.4 631.1M786.1 630.6L801.4 638.3M786.1 637.8L801.4 645.5M786.1 661.9L801.4 669.5M786.1 669.1L801.4 676.7M786.1 676.3L801.4 683.9M802 573.7L817.2 581.4M802 580.9L817.2 588.6M802 588.1L817.2 595.8M802 612.2L817.2 619.8M802 619.4L817.2 627M802 626.6L817.2 634.2M802 650.6L817.2 658.2M802 657.8L817.2 665.5M802 665L817.2 672.7M817.8 600.9L833.1 608.5M817.8 608.1L833.1 615.8M817.8 615.3L833.1 623M817.8 639.3L833.1 647M817.8 646.5L833.1 654.2M817.8 653.7L833.1 661.4M817.8 677.8L833.1 685.4M817.8 685L833.1 692.6M817.8 692.2L833.1 699.8M833.7 589.6L848.9 597.3M833.7 596.8L848.9 604.5M833.7 604L848.9 611.7M833.7 628.1L848.9 635.7M833.7 635.3L848.9 642.9M833.7 642.5L848.9 650.1M833.7 666.5L848.9 674.2M833.7 673.7L848.9 681.4M833.7 680.9L848.9 688.6M849.5 616.8L864.8 624.5M849.5 624L864.8 631.7M849.5 631.2L864.8 638.9M849.5 655.2L864.8 662.9M849.5 662.5L864.8 670.1M849.5 669.7L864.8 677.3M849.5 693.7L864.8 701.3M849.5 700.9L864.8 708.5M849.5 708.1L864.8 715.8M865.4 605.5L880.6 613.2M865.4 612.7L880.6 620.4M865.4 620L880.6 627.6M865.4 644L880.6 651.6M865.4 651.2L880.6 658.8M865.4 658.4L880.6 666.1M865.4 682.4L880.6 690.1M865.4 689.6L880.6 697.3M865.4 696.8L880.6 704.5M881.2 632.7L896.5 640.4M881.2 639.9L896.5 647.6M881.2 647.1L896.5 654.8M881.2 671.2L896.5 678.8M881.2 678.4L896.5 686M881.2 685.6L896.5 693.2M881.2 709.6L896.5 717.3M881.2 716.8L896.5 724.5M881.2 724L896.5 731.7M897.1 621.5L912.3 629.1M897.1 628.7L912.3 636.3M897.1 635.9L912.3 643.5M897.1 659.9L912.3 667.6M897.1 667.1L912.3 674.8M897.1 674.3L912.3 682M897.1 698.3L912.3 706M897.1 705.5L912.3 713.2M897.1 712.7L912.3 720.4M912.9 610.2L928.2 617.8M912.9 617.4L928.2 625.1M912.9 624.6L928.2 632.3M912.9 648.6L928.2 656.3M912.9 655.8L928.2 663.5M912.9 663L928.2 670.7M912.9 687.1L928.2 694.7M912.9 694.3L928.2 701.9M912.9 701.5L928.2 709.1M912.9 725.5L928.2 733.2M912.9 732.7L928.2 740.4M912.9 739.9L928.2 747.6M928.8 637.4L944 645M928.8 644.6L944 652.2M928.8 651.8L944 659.4M928.8 675.8L944 683.5M928.8 683L944 690.7M928.8 690.2L944 697.9M928.8 714.2L944 721.9M928.8 721.5L944 729.1M928.8 728.7L944 736.3M944.6 626.1L959.9 633.8M944.6 633.3L959.9 641M944.6 640.5L959.9 648.2M944.6 664.5L959.9 672.2M944.6 671.8L959.9 679.4M944.6 679L959.9 686.6M944.6 703L959.9 710.6M944.6 710.2L959.9 717.8M944.6 717.4L959.9 725.1M944.6 741.4L959.9 749.1M944.6 748.6L959.9 756.3M944.6 755.8L959.9 763.5M960.5 653.3L975.7 660.9M960.5 660.5L975.7 668.1M960.5 667.7L975.7 675.4M960.5 691.7L975.7 699.4M960.5 698.9L975.7 706.6M960.5 706.1L975.7 713.8M960.5 730.2L975.7 737.8M960.5 737.4L975.7 745M960.5 744.6L975.7 752.2M976.3 642L991.6 649.7M976.3 649.2L991.6 656.9M976.3 656.4L991.6 664.1M976.3 680.5L991.6 688.1M976.3 687.7L991.6 695.3M976.3 694.9L991.6 702.5M976.3 718.9L991.6 726.6M976.3 726.1L991.6 733.8M976.3 733.3L991.6 741M976.3 757.3L991.6 765M976.3 764.5L991.6 772.2M976.3 771.8L991.6 779.4M992.2 669.2L1007.4 676.9M992.2 676.4L1007.4 684.1M992.2 683.6L1007.4 691.3M992.2 707.6L1007.4 715.3M992.2 714.8L1007.4 722.5M992.2 722L1007.4 729.7M992.2 746.1L1007.4 753.7M992.2 753.3L1007.4 760.9M992.2 760.5L1007.4 768.1M1008 657.9L1023.3 665.6M1008 665.1L1023.3 672.8M1008 672.3L1023.3 680M1008 696.4L1023.3 704M1008 703.6L1023.3 711.2M1008 710.8L1023.3 718.4M1008 734.8L1023.3 742.5M1008 742L1023.3 749.7M1008 749.2L1023.3 756.9M1008 773.3L1023.3 780.9M1008 780.5L1023.3 788.1M1008 787.7L1023.3 795.3M1023.9 685.1L1039.1 692.8M1023.9 692.3L1039.1 700M1023.9 699.5L1039.1 707.2M1023.9 723.5L1039.1 731.2M1023.9 730.8L1039.1 738.4M1023.9 738L1039.1 745.6M1023.9 762L1039.1 769.6M1023.9 769.2L1039.1 776.9M1023.9 776.4L1039.1 784.1M1039.7 673.8L1055 681.5M1039.7 681.1L1055 688.7M1039.7 688.3L1055 695.9M1039.7 712.3L1055 719.9M1039.7 719.5L1055 727.1M1039.7 726.7L1055 734.4M1039.7 750.7L1055 758.4M1039.7 757.9L1055 765.6M1039.7 765.1L1055 772.8M1039.7 789.2L1055 796.8M1039.7 796.4L1055 804M1039.7 803.6L1055 811.2M1055.6 701L1070.8 708.7M1055.6 708.2L1070.8 715.9M1055.6 715.4L1070.8 723.1M1055.6 739.5L1070.8 747.1M1055.6 746.7L1070.8 754.3M1055.6 753.9L1070.8 761.5M1055.6 777.9L1070.8 785.6M1055.6 785.1L1070.8 792.8M1055.6 792.3L1070.8 800M1071.4 728.2L1086.7 735.9M1071.4 735.4L1086.7 743.1M1071.4 742.6L1086.7 750.3M1071.4 766.6L1086.7 774.3M1071.4 773.8L1086.7 781.5M1071.4 781.1L1086.7 788.7M1071.4 805.1L1086.7 812.7M1071.4 812.3L1086.7 819.9M1071.4 819.5L1086.7 827.1M1087.3 716.9L1102.5 724.6M1087.3 724.1L1102.5 731.8M1087.3 731.4L1102.5 739M1087.3 755.4L1102.5 763M1087.3 762.6L1102.5 770.2M1087.3 769.8L1102.5 777.4M1087.3 793.8L1102.5 801.5M1087.3 801L1102.5 808.7M1087.3 808.2L1102.5 815.9M1103.1 744.1L1118.4 751.8M1103.1 751.3L1118.4 759M1103.1 758.5L1118.4 766.2M1103.1 782.6L1118.4 790.2M1103.1 789.8L1118.4 797.4M1103.1 797L1118.4 804.6M1103.1 821L1118.4 828.6M1103.1 828.2L1118.4 835.9M1103.1 835.4L1118.4 843.1M1119 771.3L1134.2 778.9M1119 778.5L1134.2 786.2M1119 785.7L1134.2 793.4M1119 809.7L1134.2 817.4M1119 816.9L1134.2 824.6M1119 824.1L1134.2 831.8M1134.8 760L1150.1 767.7M1134.8 767.2L1150.1 774.9M1134.8 774.4L1150.1 782.1M1134.8 798.5L1150.1 806.1M1134.8 805.7L1150.1 813.3M1134.8 812.9L1150.1 820.5M1134.8 836.9L1150.1 844.6M1134.8 844.1L1150.1 851.8M1134.8 851.3L1150.1 859M1150.7 787.2L1165.9 794.9M1150.7 794.4L1165.9 802.1M1150.7 801.6L1165.9 809.3M1150.7 825.6L1165.9 833.3M1150.7 832.8L1165.9 840.5M1150.7 840.1L1165.9 847.7M1166.5 814.4L1181.8 822M1166.5 821.6L1181.8 829.2M1166.5 828.8L1181.8 836.4M1166.5 852.8L1181.8 860.5M1166.5 860L1181.8 867.7M1166.5 867.2L1181.8 874.9M1182.4 803.1L1197.6 810.8M1182.4 810.3L1197.6 818M1182.4 817.5L1197.6 825.2M1182.4 841.6L1197.6 849.2M1182.4 848.8L1197.6 856.4M1182.4 856L1197.6 863.6"/>
</g>
<polygon points="176.5,249 473.3,42.5 1185,42.5 1185,814 1139.6,790.5 1106.4,758 1079.8,729.8 1058.2,704.9 1025,686.6 1000,673.3 980,662.4 926.8,637.9 901.5,627.8 857.6,617.6 839.9,615.1 807,592 780,575.4 706.3,526.6 650.6,499.2 670,476.7 703.3,440.8 640,427.3 520,399.2 463.5,385.6 459.5,401.7 292,319 236,284.6 188.2,255.3" fill="#715848" shape-rendering="crispEdges"/>
<polygon points="530,43 567.5,43 594.5,90 640,159.8 685,230.7 729.5,300.6 773,370 762,378 712.7,306.7 663,235.1 611.4,164.2 559,93" fill="#745a4a"/>
<polygon points="567.5,43 687,43 692.4,54.2 719.4,130.5 746.4,207.1 775.1,283 801,360 773,370 729.5,300.6 685,230.7 640,159.8 594.5,90" fill="url(#gmid)"/>
<polygon points="687,43 716,43 753.2,132.2 793.4,210.5 839,287.4 881.5,363.4 801,360 775.1,283 746.4,207.1 719.4,130.5 692.4,54.2" fill="url(#gband)"/>
<polygon points="716,43 906.5,43 903.1,80.5 894.7,175 886.3,270.5 881.5,363.4 839,287.4 793.4,210.5 753.2,132.2" fill="url(#gright)"/>
<path d="M531 43L763 378" stroke="#765c4c" stroke-width="7" fill="none" stroke-linecap="butt"/>
<path d="M530 43L762 378" stroke="#7b6151" stroke-width="2" fill="none"/>
<polygon points="1055,43 1185,43 1185,175" fill="#735949"/>
<polygon points="780,548 891.4,568.4 844,615 839.9,615.1 807,592 780,575.4 743,551" fill="#6c5344"/>
<polygon points="844,615 891.4,568.4 897,600 908,628 927,637.9 901.5,627.8 857.6,617.6" fill="#5c493c"/>
<polygon points="844,615 891.4,568.4 893,585 862,609" fill="#58453a"/>
<polygon points="1058.2,703 1185,722 1185,814 1139.6,790.5 1106.4,758 1079.8,729.8" fill="#6a5041"/>
<polygon points="1139.6,710.7 1185,721.5 1185,736.5 1169.5,758.1 1152.9,783 1146.3,796.3 1139.6,790.5 1131.3,781.3 1134.6,746.4" fill="#5f4a3d"/>
<polygon points="1185,736.5 1185,773 1174.5,786.3 1157.9,773 1169.5,758.1" fill="#675041"/>

<polygon points="463.3,385.4 520,399.2 640,427.3 703.3,440.8 671,477.5 463.5,429" fill="#261d19" shape-rendering="crispEdges"/>
<polygon points="463.5,429 670,476.7 650.6,499.2 650.6,540.5 460.1,445.9 460.1,441.2" fill="#f6f6f6" shape-rendering="crispEdges"/>
<polygon points="460.1,445.9 650.6,540.5 650.6,546 460.1,451.2" fill="#5c5c5d" shape-rendering="crispEdges"/>
<polygon points="463.3,385.4 459.5,401.7 460.1,441.2 463.5,429" fill="#7a6254" shape-rendering="crispEdges"/>
<polygon points="784.5,471.4 916.5,425.5 1158.8,447.5 1158.8,536 973,566" fill="#00d566" shape-rendering="crispEdges"/>
<g fill="none" shape-rendering="crispEdges">
<path d="M784.5 471.4L916.5 425.5" stroke="#0c2414" stroke-width="0.94"/>
<path d="M916.5 425.5L1158.8 447.5M1158.8 447.5L1158.8 536" stroke="#0c2414" stroke-width="1"/>
<path d="M1158.8 536L973 566" stroke="#0c2414" stroke-width="0.99"/>
<path d="M973 566L784.5 471.4" stroke="#0c2414" stroke-width="0.89"/>
<path d="M428.2 74.3L438.4 78M594.5 90L692.4 54.2" stroke="#800000" stroke-width="0.94"/>
<path d="M438.4 78L490 84.4M490 84.4L559 93" stroke="#800000" stroke-width="0.99"/>
<path d="M559 93L594.5 90M692.4 54.2L707.6 54.9" stroke="#800000" stroke-width="1"/>
<path d="M707.6 54.9L743 42.7" stroke="#800000" stroke-width="0.95"/>
<path d="M349.2 129.6L355.3 132" stroke="#800000" stroke-width="0.93"/>
<path d="M355.3 132L490 149.2M490 149.2L611.4 164.2M611.4 164.2L640 159.8" stroke="#800000" stroke-width="0.99"/>
<path d="M640 159.8L719.4 130.5" stroke="#800000" stroke-width="0.94"/>
<path d="M719.4 130.5L753.2 132.2M903.1 80.5L1017.9 87.3M1017.9 87.3L1090.5 83.2" stroke="#800000" stroke-width="1"/>
<path d="M753.2 132.2L903.1 80.5" stroke="#800000" stroke-width="0.95"/>
<path d="M1090.5 83.2L1185 43.4" stroke="#800000" stroke-width="0.92"/>
<path d="M271.3 183.7L278.4 187.3" stroke="#800000" stroke-width="0.89"/>
<path d="M278.4 187.3L490 213.6M490 213.6L663 235.1" stroke="#800000" stroke-width="0.99"/>
<path d="M663 235.1L685 230.7" stroke="#800000" stroke-width="0.98"/>
<path d="M685 230.7L746.4 207.1" stroke="#800000" stroke-width="0.93"/>
<path d="M746.4 207.1L793.4 210.5M894.7 175L1068.5 185.1M1068.5 185.1L1176.6 180.1" stroke="#800000" stroke-width="1"/>
<path d="M793.4 210.5L894.7 175" stroke="#800000" stroke-width="0.94"/>
<path d="M1176.6 180.1L1185 176" stroke="#800000" stroke-width="0.9"/>
<path d="M192.4 239.1L197 241" stroke="#800000" stroke-width="0.92"/>
<path d="M197 241L220 244.7M220 244.7L290 253.2M290 253.2L380 264.8M380 264.8L500 280.3M500 280.3L712.7 306.7" stroke="#800000" stroke-width="0.99"/>
<path d="M712.7 306.7L729.5 300.6M839 287.4L886.3 270.5" stroke="#800000" stroke-width="0.94"/>
<path d="M729.5 300.6L775.1 283" stroke="#800000" stroke-width="0.93"/>
<path d="M775.1 283L839 287.4M886.3 270.5L1119.2 283M1119.2 283L1185 280.3" stroke="#800000" stroke-width="1"/>
<path d="M291.8 318.4L480 341.5M480 341.5L762 378" stroke="#800000" stroke-width="0.99"/>
<path d="M762 378L773 370" stroke="#800000" stroke-width="0.81"/>
<path d="M773 370L801 360" stroke="#800000" stroke-width="0.94"/>
<path d="M801 360L1171.7 381M1171.7 381L1185 380" stroke="#800000" stroke-width="1"/>
<path d="M1079.8 729.3L1133 734.8" stroke="#800000" stroke-width="0.99"/>
<path d="M1133 734.8L1160 741.5" stroke="#800000" stroke-width="0.97"/>
<path d="M1160 741.5L1185 750.6" stroke="#800000" stroke-width="0.94"/>
<path d="M1106.4 757.6L1149.6 764.7" stroke="#800000" stroke-width="0.99"/>
<path d="M1149.6 764.7L1168 771.5" stroke="#800000" stroke-width="0.94"/>
<path d="M1168 771.5L1185 779.7" stroke="#800000" stroke-width="0.9"/>
<path d="M1141.3 790.5L1169.6 804.6" stroke="#800000" stroke-width="0.9"/>
<path d="M1169.6 804.6L1185 809.3" stroke="#800000" stroke-width="0.96"/>
<path d="M807 592.3L855.1 602.8" stroke="#800000" stroke-width="0.98"/>
<path d="M855.1 602.8L857.6 617.6" stroke="#800000" stroke-width="0.99"/>
<path d="M473.3 42.5L176.5 249" stroke="#000" stroke-width="0.82"/>
<path d="M176.5 249L176.5 353.5" stroke="#000" stroke-width="1"/>
<path d="M176.5 353.5L1141 837" stroke="#000" stroke-width="0.89"/>
<path d="M176.5 249L188.2 255.3M980 662.4L1000 673.3M1000 673.3L1025 686.6M1025 686.6L1058.2 704.9" stroke="#000" stroke-width="0.88"/>
<path d="M188.2 255.3L236 284.6M236 284.6L292 319M780 575.4L807 592" stroke="#000" stroke-width="0.85"/>
<path d="M292 319L459.5 401.7M650.6 499.2L706.3 526.6" stroke="#000" stroke-width="0.9"/>
<path d="M459.5 401.7L463.3 385.4M463.3 385.4L520 399.2M520 399.2L640 427.3M857.6 617.6L901.5 627.8" stroke="#000" stroke-width="0.97"/>
<path d="M640 427.3L703.3 440.8" stroke="#000" stroke-width="0.98"/>
<path d="M703.3 440.8L670 476.7M1079.8 729.8L1106.4 758" stroke="#000" stroke-width="0.73"/>
<path d="M670 476.7L650.6 499.2M1058.2 704.9L1079.8 729.8" stroke="#000" stroke-width="0.76"/>
<path d="M706.3 526.6L780 575.4" stroke="#000" stroke-width="0.83"/>
<path d="M807 592L839.9 615.1" stroke="#000" stroke-width="0.82"/>
<path d="M839.9 615.1L857.6 617.6" stroke="#000" stroke-width="0.99"/>
<path d="M901.5 627.8L926.8 637.9" stroke="#000" stroke-width="0.93"/>
<path d="M926.8 637.9L980 662.4" stroke="#000" stroke-width="0.91"/>
<path d="M1106.4 758L1139.6 790.5" stroke="#000" stroke-width="0.71"/>
<path d="M1139.6 790.5L1185 814" stroke="#000" stroke-width="0.89"/>
<path d="M463.5 385.4L463.5 429" stroke="#000" stroke-width="1"/>
<path d="M463.5 429L670 476.7" stroke="#000" stroke-width="0.97"/>
<path d="M459.8 400.5L460.1 451.2M650.6 546L650.6 499.2" stroke="#000" stroke-width="1"/>
<path d="M460.1 451.2L650.6 546" stroke="#000" stroke-width="0.9"/>
<path d="M460.1 445.9L650.6 540.5" stroke="#000" stroke-width="0.9"/>
<path d="M84 130L1185 682.6" stroke="#000" stroke-width="0.89"/>
<path d="M84 314L1124 837" stroke="#000" stroke-width="0.89"/>
</g>
</svg>
</div>
<div id="bottombar" class="abs"></div>
<svg class="abs" width="1185" height="843" viewBox="0 0 1185 843" style="left:0;top:0;pointer-events:none;will-change:transform">

<g transform="translate(88,24)"><rect x="0" y="0" width="8" height="13" fill="#999da8"/>
<rect x="8" y="1" width="5" height="5" fill="#8d919c"/>
<rect x="6" y="6" width="8" height="8" fill="#a5a9b3"/>
<path d="M5.5 5v8" stroke="#7f838e" stroke-width="1" stroke-dasharray="2 1" fill="none"/>
<path d="M8 3.5h4M9 5.5h2" stroke="#777b86" stroke-width="1" fill="none" opacity="0.6"/></g>
<g transform="translate(216,24)"><rect x="0" y="0" width="8" height="13" fill="#999da8"/>
<rect x="8" y="1" width="5" height="5" fill="#8d919c"/>
<rect x="6" y="6" width="8" height="8" fill="#a5a9b3"/>
<path d="M5.5 5v8" stroke="#7f838e" stroke-width="1" stroke-dasharray="2 1" fill="none"/>
<path d="M8 3.5h4M9 5.5h2" stroke="#777b86" stroke-width="1" fill="none" opacity="0.6"/></g>
<g transform="translate(344,24)"><rect x="0" y="0" width="8" height="13" fill="#999da8"/>
<rect x="8" y="1" width="5" height="5" fill="#8d919c"/>
<rect x="6" y="6" width="8" height="8" fill="#a5a9b3"/>
<path d="M5.5 5v8" stroke="#7f838e" stroke-width="1" stroke-dasharray="2 1" fill="none"/>
<path d="M8 3.5h4M9 5.5h2" stroke="#777b86" stroke-width="1" fill="none" opacity="0.6"/></g>
<!-- house icon -->
<g transform="translate(496,22)">
<path d="M2 9L7.2 5.6L12.3 9.5V15.8H2z" fill="#fafafa"/>
<path d="M12.3 9.5L15 8.6V14.6L12.3 15.8z" fill="#cfcfcf"/>
<path d="M0.9 8.6L6.5 3.3L7.4 4.4L1.8 9.4z" fill="#dcdcdc"/>
<path d="M6.5 3.3L9.5 0.8L16.2 8.2L12.9 10.6z" fill="#a9adb1"/>
<path d="M6.5 3.3L12.9 10.6" stroke="#6f7378" stroke-width="0.8" fill="none"/>
<rect x="5.2" y="11.4" width="3.3" height="4.6" fill="#e9e272" stroke="#3a3520" stroke-width="0.8"/>
</g>
<!-- close icons -->
<path d="M67.6 25.4L76.4 33.8M76.4 25.4L67.6 33.8" stroke="#b9bdc6" stroke-width="1.8" fill="none"/>
<path d="M604.6 27.3L613.4 35.7M613.4 27.3L604.6 35.7" stroke="#b9bdc6" stroke-width="1.8" fill="none"/>
<g font-family="'Liberation Sans',sans-serif" font-size="12" fill="#e6e8ed">
<text x="110.3" y="36">Nivel 1</text>
<text x="238.3" y="36" textLength="36.2" lengthAdjust="spacingAndGlyphs">Nivel 2</text>
<text x="366.3" y="36" textLength="102.4" lengthAdjust="spacingAndGlyphs">Planimetría general</text>
<text x="519.8" y="36" font-weight="bold" fill="#ffffff" textLength="24.2" lengthAdjust="spacingAndGlyphs">{3D}</text>
<text x="-1.2" y="34.2" fill="#ffffff" font-size="15.5">l</text>
<text x="108" y="850.4" fill="#f0f2f5">1 : 200</text>
</g>
<g shape-rendering="auto">
<!-- detail level grid -->
<rect x="167.5" y="840.5" width="15" height="6" fill="#3f444e" stroke="#c6c8cc" stroke-width="1"/>
<path d="M171.5 841v3M175.5 841v3M179.5 841v3" stroke="#c6c8cc" stroke-width="1" fill="none"/>
<!-- visual style -->
<path d="M198 839h10v2l-3 3h-11z" fill="#5aa9ea"/>
<path d="M198 839h10" stroke="#bfe0fb" stroke-width="1" fill="none"/>
<!-- sun -->
<rect x="224.3" y="838" width="1.4" height="2" fill="#f6c35c"/>
<rect x="221" y="840" width="1.5" height="1.5" fill="#f6c35c"/>
<rect x="227.6" y="840" width="1.5" height="1.5" fill="#f6c35c"/>
<circle cx="225" cy="845.8" r="4.2" fill="#f3a436"/>
<!-- shadows sphere -->
<circle cx="250.3" cy="843.6" r="5.6" fill="#e9eaec"/>
<!-- teapot -->
<path d="M278.5 839h2v1.5h3.5l2 2.5h-13l2-2.5h3.5z" fill="#d5d7da"/>
<!-- crop icons -->
<rect x="307" y="838" width="1.6" height="3.6" fill="#8fb8ea"/>
<rect x="301.5" y="842" width="11.5" height="2" fill="#e8e9eb"/>
<rect x="333" y="838" width="1.6" height="3.6" fill="#8fb8ea"/>
<rect x="327.3" y="842" width="11" height="2" fill="#e8e9eb"/>
<!-- house grey -->
<path d="M358.5 838.3L364.5 843.5h-12z" fill="#9b9d9f"/>
<path d="M358.5 840.5L362 843.5h-7z" fill="#6c6e72"/>
<!-- glasses -->
<path d="M378.5 843a2.6 2.6 0 0 1 5 0zM383.8 843a2.6 2.6 0 0 1 5 0z" fill="#6d717a"/>
<!-- cyan -->
<circle cx="409" cy="844.3" r="4.3" fill="#5cd2e2"/>
<!-- flag -->
<path d="M429 840.3h7v3h-7zM436.5 840.3l3.5 2.7h-3.5z" fill="#e6e7ea"/>
<!-- box -->
<path d="M457.5 838.5h9.5v5M457.5 838.5l-4 4.5M462 839v2h4M457 841.5h5v2" stroke="#e3e4e7" stroke-width="1" fill="none"/>
<!-- blue -->
<path d="M487 841h5l-2 2.5h-5z" fill="#4aa2e4"/>
<!-- dimension -->
<path d="M505.8 838v5M518 838v5M506 840.8h12" stroke="#eeeeef" stroke-width="1.1" fill="none"/>
<path d="M508.5 839.3l-2 1.5 2 1.5zM515.5 839.3l2 1.5-2 1.5z" fill="#eeeeef"/>
<!-- chevron area -->
<rect x="525" y="838" width="18" height="5" fill="#3f4858"/>
<path d="M536.5 840.3l-4.5 3h4.5z" fill="#6c7380"/>
<rect x="542.5" y="837" width="1" height="6" fill="#2a303c"/>
<!-- scrollbar hint -->
<rect x="974" y="841.5" width="14.5" height="4" rx="1.5" fill="#8c95a7"/>
</g>

</svg>

</body>
</html>
